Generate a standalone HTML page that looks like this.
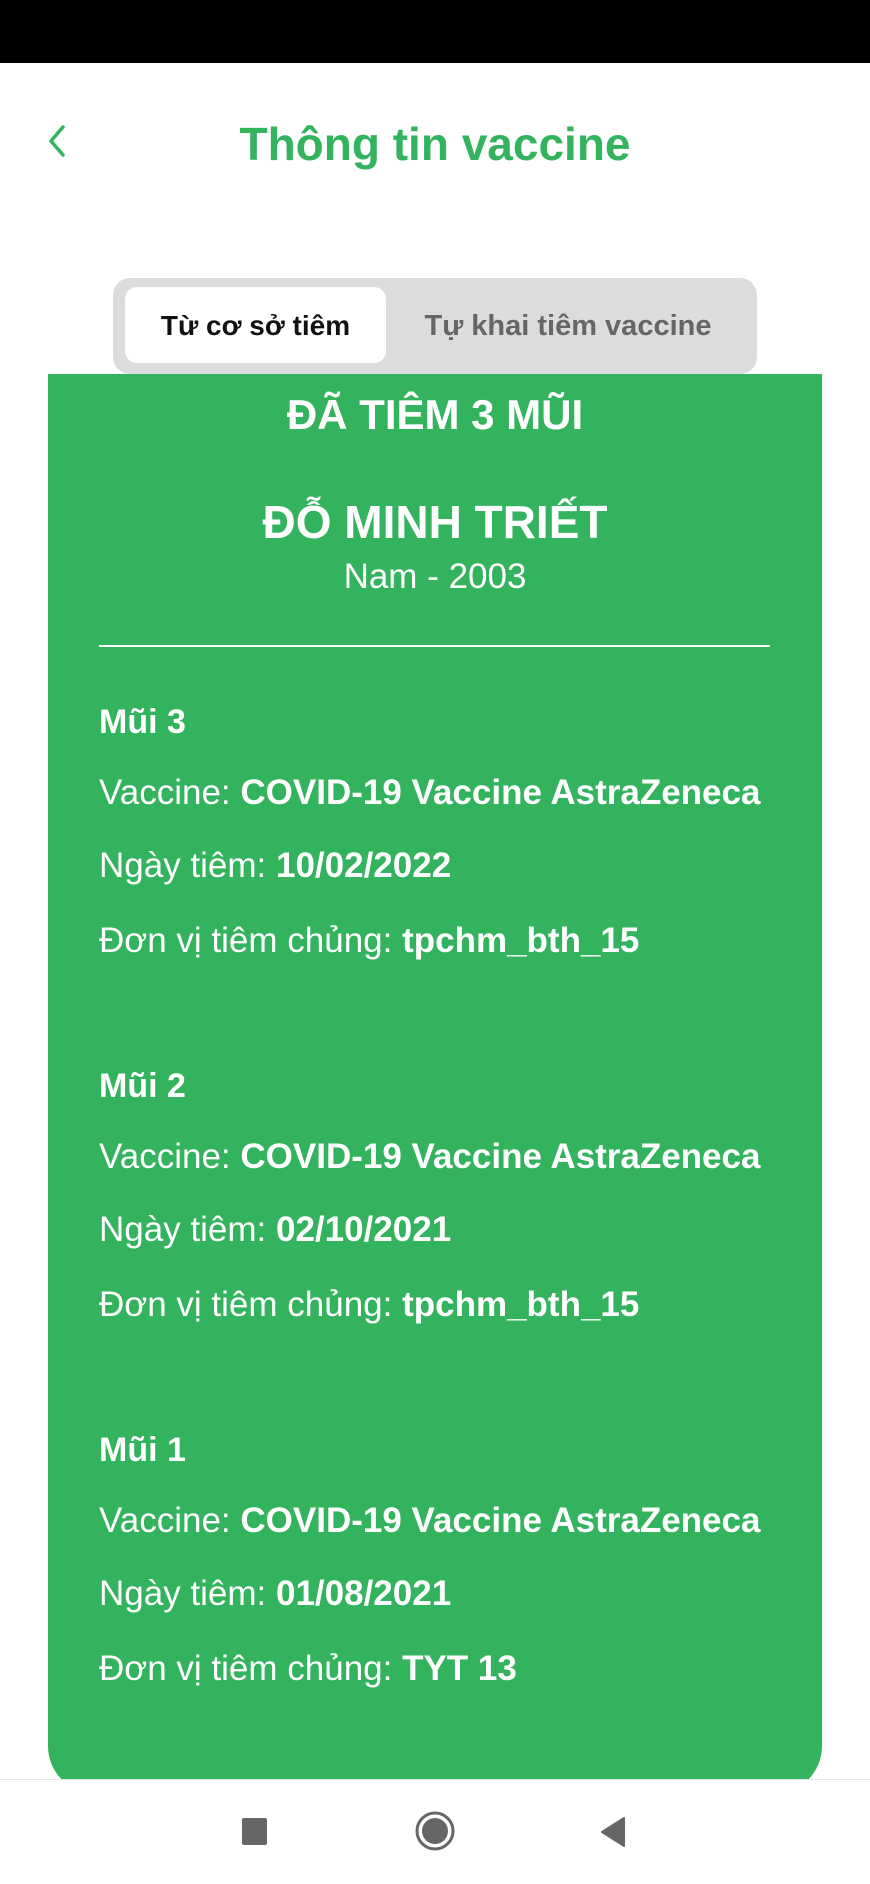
<!DOCTYPE html>
<html><head><meta charset="utf-8"><style>
*{margin:0;padding:0;box-sizing:border-box}
body{width:870px;height:1884px;position:relative;background:#fff;font-family:"Liberation Sans",sans-serif;overflow:hidden}
.a{position:absolute;line-height:1;white-space:nowrap}
.c{left:0;width:870px;text-align:center}
.w{color:#fff}
b{font-weight:700}
</style></head><body>
<div class="a" style="left:0;top:0;width:870px;height:63px;background:#000"></div>
<svg class="a" style="left:44px;top:122px" width="28" height="38" viewBox="0 0 28 38"><path d="M19 5 L7 19 L19 33" fill="none" stroke="#33b35d" stroke-width="3.5" stroke-linecap="round" stroke-linejoin="round"/></svg>
<div class="a c" style="top:121px;font-size:46px;font-weight:700;color:#33b35d">Thông tin vaccine</div>
<div class="a" style="left:113px;top:278px;width:644px;height:96px;background:#dcdcdc;border-radius:17px"></div>
<div class="a" style="left:125px;top:287px;width:261px;height:76px;background:#fff;border-radius:12px"></div>
<div class="a" style="left:125px;top:312px;width:261px;text-align:center;font-size:28px;font-weight:700;color:#111">Từ cơ sở tiêm</div>
<div class="a" style="left:398px;top:312px;width:340px;text-align:center;font-size:29px;font-weight:700;color:#666">Tự khai tiêm vaccine</div>
<div class="a" style="left:48px;top:374px;width:774px;height:1420px;background:#33b35d;border-radius:0 0 48px 48px"></div>
<div class="a c w" style="top:394px;font-size:42px;font-weight:700">ĐÃ TIÊM 3 MŨI</div>
<div class="a c w" style="top:499px;font-size:46px;font-weight:700">ĐỖ MINH TRIẾT</div>
<div class="a c w" style="top:559px;font-size:35px">Nam - 2003</div>
<div class="a" style="left:99px;top:645px;width:671px;height:2px;background:#fff"></div>

<div class="a w" style="left:99px;top:705px;font-size:34px"><b>Mũi 3</b></div>
<div class="a w" style="left:99px;top:775px;font-size:35px">Vaccine: <b>COVID-19 Vaccine AstraZeneca</b></div>
<div class="a w" style="left:99px;top:848px;font-size:35px">Ngày tiêm: <b>10/02/2022</b></div>
<div class="a w" style="left:99px;top:923px;font-size:35px">Đơn vị tiêm chủng: <b>tpchm_bth_15</b></div>

<div class="a w" style="left:99px;top:1069px;font-size:34px"><b>Mũi 2</b></div>
<div class="a w" style="left:99px;top:1139px;font-size:35px">Vaccine: <b>COVID-19 Vaccine AstraZeneca</b></div>
<div class="a w" style="left:99px;top:1212px;font-size:35px">Ngày tiêm: <b>02/10/2021</b></div>
<div class="a w" style="left:99px;top:1287px;font-size:35px">Đơn vị tiêm chủng: <b>tpchm_bth_15</b></div>

<div class="a w" style="left:99px;top:1433px;font-size:34px"><b>Mũi 1</b></div>
<div class="a w" style="left:99px;top:1503px;font-size:35px">Vaccine: <b>COVID-19 Vaccine AstraZeneca</b></div>
<div class="a w" style="left:99px;top:1576px;font-size:35px">Ngày tiêm: <b>01/08/2021</b></div>
<div class="a w" style="left:99px;top:1651px;font-size:35px">Đơn vị tiêm chủng: <b>TYT 13</b></div>

<div class="a" style="left:0;top:1779px;width:870px;height:105px;background:#fff;border-top:1px solid #e5e5e5"></div>
<div class="a" style="left:242px;top:1818px;width:25px;height:27px;background:#666;border-radius:2px"></div>
<svg class="a" style="left:414px;top:1810px" width="42" height="42" viewBox="0 0 42 42"><circle cx="21" cy="21" r="18" fill="none" stroke="#666" stroke-width="3"/><circle cx="21" cy="21" r="13" fill="#666"/></svg>
<svg class="a" style="left:598px;top:1815px" width="30" height="34" viewBox="0 0 30 34"><path d="M26 3 L26 31 L4 17 Z" fill="#666" stroke="#666" stroke-width="2" stroke-linejoin="round"/></svg>
</body></html>
